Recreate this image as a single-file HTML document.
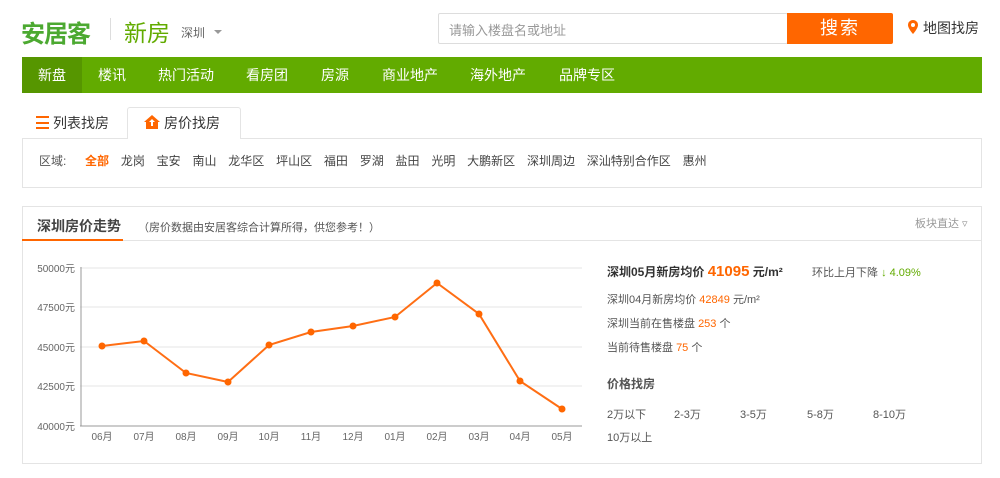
<!DOCTYPE html>
<html><head><meta charset="utf-8"><style>
*{margin:0;padding:0;box-sizing:border-box}
body{width:1000px;height:478px;background:#fff;font-family:"Liberation Sans","Noto Sans CJK SC",sans-serif;color:#333;position:relative;overflow:hidden}
.a{position:absolute;white-space:nowrap}
.reg span{margin-right:11.8px}
</style></head><body>
<div class="a" style="left:21px;top:14px;font-size:24px;font-weight:bold;color:#4ca931;letter-spacing:-1px">安居客</div>
<div class="a" style="left:110px;top:18px;width:1px;height:22px;background:#ddd"></div>
<div class="a" style="left:124px;top:14px;font-size:23px;color:#62ab00">新房</div>
<div class="a" style="left:181px;top:24px;font-size:12px;color:#666">深圳</div>
<div class="a" style="left:214px;top:30px;border:4px solid transparent;border-top-color:#999"></div>
<div class="a" style="left:438px;top:13px;width:350px;height:31px;border:1px solid #ddd;border-radius:2px"></div>
<div class="a" style="left:449px;top:20px;font-size:13px;color:#999">请输入楼盘名或地址</div>
<div class="a" style="left:787px;top:13px;width:106px;height:31px;background:#ff6600;border-radius:0 2px 2px 0;color:#fff;font-size:18px;text-align:center;line-height:31px;letter-spacing:2px">搜索</div>
<svg class="a" style="left:908px;top:20px" width="10" height="14" viewBox="0 0 10 14"><path d="M5 0C2.2 0 0 2.2 0 5c0 3.5 5 9 5 9s5-5.5 5-9c0-2.8-2.2-5-5-5z" fill="#ff6600"/><circle cx="5" cy="5" r="2" fill="#fff"/></svg>
<div class="a" style="left:923px;top:18px;font-size:14px;color:#333">地图找房</div>
<div class="a" style="left:22px;top:57px;width:960px;height:36px;background:#62ab00"></div>
<div class="a" style="left:22px;top:57px;width:60px;height:36px;background:#569600"></div>
<div class="a" style="left:22px;top:57px;height:36px;line-height:36px;font-size:14px;color:#fff;display:flex">
<span style="width:60px;text-align:center">新盘</span><span style="margin-left:16px">楼讯</span><span style="margin-left:32px">热门活动</span><span style="margin-left:32px">看房团</span><span style="margin-left:33px">房源</span><span style="margin-left:33px">商业地产</span><span style="margin-left:32px">海外地产</span><span style="margin-left:33px">品牌专区</span></div>
<div class="a" style="left:36px;top:116px;width:13px;height:13px;border-top:2px solid #ff6600;border-bottom:2px solid #ff6600"><div style="margin-top:3.5px;height:2px;background:#ff6600"></div></div>
<div class="a" style="left:53px;top:113px;font-size:14px;color:#333">列表找房</div>
<div class="a" style="left:127px;top:107px;width:114px;height:32px;border:1px solid #e4e4e4;border-bottom:none;background:#fff;border-radius:3px 3px 0 0;z-index:2"></div>
<svg class="a" style="left:144px;top:115px;z-index:3" width="16" height="14" viewBox="0 0 16 14"><path d="M8 0L0 7h2v7h12V7h2z" fill="#ff6600"/><path d="M8 4L5 7h2v4h2V7h2z" fill="#fff"/></svg>
<div class="a" style="left:164px;top:113px;font-size:14px;color:#333;z-index:3">房价找房</div>
<div class="a" style="left:22px;top:138px;width:960px;height:50px;border:1px solid #e4e4e4"></div>
<div class="a" style="left:39px;top:152px;font-size:12px;color:#555">区域:</div>
<div class="a reg" style="left:85px;top:152px;font-size:12px;color:#444">
<span style="color:#ff6600;font-weight:bold">全部</span><span>龙岗</span><span>宝安</span><span>南山</span><span>龙华区</span><span>坪山区</span><span>福田</span><span>罗湖</span><span>盐田</span><span>光明</span><span>大鹏新区</span><span>深圳周边</span><span>深汕特别合作区</span><span>惠州</span></div>
<div class="a" style="left:22px;top:206px;width:960px;height:258px;border:1px solid #e4e4e4"></div>
<div class="a" style="left:22px;top:240px;width:960px;height:1px;background:#e4e4e4"></div>
<div class="a" style="left:22px;top:239px;width:101px;height:2px;background:#ff6600"></div>
<div class="a" style="left:37px;top:216px;font-size:14px;font-weight:bold;color:#444">深圳房价走势</div>
<div class="a" style="left:138px;top:219px;font-size:11px;color:#555">（房价数据由安居客综合计算所得，供您参考！）</div>
<div class="a" style="left:915px;top:215px;font-size:11px;color:#999">板块直达 ▿</div>
<svg class="a" style="left:0;top:250px" width="600" height="200">
<g font-size="10" fill="#666" font-family="Liberation Sans,Noto Sans CJK SC,sans-serif">
<g stroke="#e6e6e6"><line x1="80" y1="18" x2="582" y2="18"/><line x1="80" y1="57" x2="582" y2="57"/><line x1="80" y1="97" x2="582" y2="97"/><line x1="80" y1="136" x2="582" y2="136"/></g>
<line x1="81" y1="17" x2="81" y2="176" stroke="#999"/><line x1="80" y1="176" x2="582" y2="176" stroke="#999"/>
<g text-anchor="end"><text x="75" y="22">50000元</text><text x="75" y="61">47500元</text><text x="75" y="101">45000元</text><text x="75" y="140">42500元</text><text x="75" y="180">40000元</text></g>
<g text-anchor="middle"><text x="102" y="190">06月</text><text x="144" y="190">07月</text><text x="186" y="190">08月</text><text x="228" y="190">09月</text><text x="269" y="190">10月</text><text x="311" y="190">11月</text><text x="353" y="190">12月</text><text x="395" y="190">01月</text><text x="437" y="190">02月</text><text x="479" y="190">03月</text><text x="520" y="190">04月</text><text x="562" y="190">05月</text></g>
</g>
<polyline fill="none" stroke="#ff6e14" stroke-width="2" points="102,96 144,91 186,123 228,132 269,95 311,82 353,76 395,67 437,33 479,64 520,131 562,159"/>
<g fill="#ff6600"><circle cx="102" cy="96" r="3.5"/><circle cx="144" cy="91" r="3.5"/><circle cx="186" cy="123" r="3.5"/><circle cx="228" cy="132" r="3.5"/><circle cx="269" cy="95" r="3.5"/><circle cx="311" cy="82" r="3.5"/><circle cx="353" cy="76" r="3.5"/><circle cx="395" cy="67" r="3.5"/><circle cx="437" cy="33" r="3.5"/><circle cx="479" cy="64" r="3.5"/><circle cx="520" cy="131" r="3.5"/><circle cx="562" cy="159" r="3.5"/></g>
</svg>
<div class="a" style="left:607px;top:263px;font-size:12px;color:#333"><b>深圳05月新房均价</b> <b style="color:#ff6600;font-size:15px">41095</b> <b>元/m²</b></div>
<div class="a" style="left:812px;top:264px;font-size:11px;color:#555">环比上月下降 <span style="color:#62ab00">↓ 4.09%</span></div>
<div class="a" style="left:607px;top:291px;font-size:11px;color:#555">深圳04月新房均价 <span style="color:#ff6600">42849</span> 元/m²</div>
<div class="a" style="left:607px;top:315px;font-size:11px;color:#555">深圳当前在售楼盘 <span style="color:#ff6600">253</span> 个</div>
<div class="a" style="left:607px;top:339px;font-size:11px;color:#555">当前待售楼盘 <span style="color:#ff6600">75</span> 个</div>
<div class="a" style="left:607px;top:375px;font-size:12px;font-weight:bold;color:#555">价格找房</div>
<div class="a" style="left:607px;top:406px;font-size:11px;color:#555">2万以下</div>
<div class="a" style="left:674px;top:406px;font-size:11px;color:#555">2-3万</div>
<div class="a" style="left:740px;top:406px;font-size:11px;color:#555">3-5万</div>
<div class="a" style="left:807px;top:406px;font-size:11px;color:#555">5-8万</div>
<div class="a" style="left:873px;top:406px;font-size:11px;color:#555">8-10万</div>
<div class="a" style="left:607px;top:429px;font-size:11px;color:#555">10万以上</div>
</body></html>
